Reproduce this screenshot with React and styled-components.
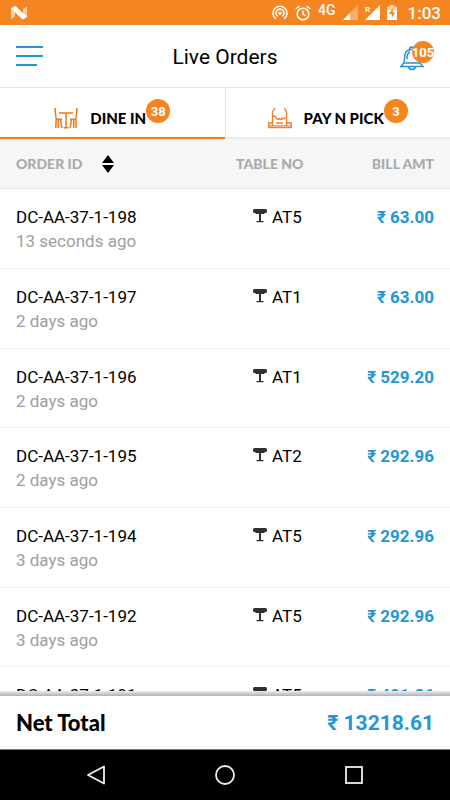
import React from "react";
import styled, { createGlobalStyle } from "styled-components";

const GlobalStyle = createGlobalStyle`
  * {
    box-sizing: border-box;
  }

  body {
    margin: 0;
    background-color: white;
    font-family: Roboto, "Liberation Sans", sans-serif;
  }

  button {
    margin: 0;
    padding: 0;
    border: none;
    background: none;
    color: inherit;
    font: inherit;
    cursor: pointer;
  }

  svg {
    display: block;
    flex: none;
  }
`;

const Screen = styled.div`
  display: flex;
  flex-direction: column;
  height: 100vh;
  color: black;
`;

const StatusBar = styled.div`
  display: flex;
  align-items: center;
  justify-content: space-between;
  height: 25px;
  flex: none;
  padding: 0 9px 0 11px;
  background-color: #f58520;
  color: white;
`;

const StatusIcons = styled.div`
  display: flex;
  align-items: center;
  gap: 7px;
`;

const Network = styled.span`
  align-self: flex-start;
  font-size: 14px;
  line-height: 18px;
  font-weight: 500;
`;

const Clock = styled.time`
  margin-left: 4px;
  font-size: 17px;
  line-height: 24px;
  font-weight: 500;
`;

const Header = styled.header`
  display: grid;
  grid-template-columns: 1fr auto 1fr;
  align-items: center;
  height: 63px;
  flex: none;
  padding: 0 16px;
  border-bottom: 1px solid #e2e2e2;
`;

const Title = styled.h1`
  margin: 2px 0 0;
  font-size: 21px;
  line-height: 24px;
  font-weight: 400;
`;

const MenuButton = styled.button`
  justify-self: start;
`;

const BellButton = styled.button`
  position: relative;
  justify-self: end;
  width: 34px;
  padding-top: 5px;
`;

const Badge = styled.span`
  display: flex;
  align-items: center;
  justify-content: center;
  flex: none;
  width: 24px;
  height: 24px;
  border-radius: 50%;
  background-color: #f58520;
  color: white;
  font-size: 13px;
  font-weight: 700;
`;

const BellBadge = styled(Badge)`
  position: absolute;
  top: 0;
  right: 0;
  width: 22px;
  height: 22px;
`;

const Tabs = styled.nav`
  display: flex;
  flex: none;
`;

const Tab = styled.button`
  display: flex;
  flex: 1;
  align-items: flex-start;
  justify-content: center;
  padding: 11px 0 7px;
  border-bottom: 2px solid ${(props) => (props.$active ? "#f57c0b" : "#ececec")};

  & + & {
    border-left: 1px solid #e2e2e2;
  }
`;

const TabLabel = styled.span`
  display: flex;
  align-items: center;
  gap: 12px;
  margin-top: 7px;
  font-family: Lato, "Liberation Sans", sans-serif;
  font-size: 15px;
  line-height: 24px;
  font-weight: 900;
`;

const Orders = styled.main`
  flex: 1;
  min-height: 0;
  overflow-y: auto;
  scrollbar-width: none;
`;

const OrderTable = styled.table`
  width: 100%;
  table-layout: fixed;
  border-collapse: separate;
  border-spacing: 0;
`;

const HeadCell = styled.th`
  position: sticky;
  top: 0;
  width: ${(props) => props.$width};
  height: 50px;
  padding: ${(props) => props.$padding};
  border-bottom: 1px solid #ececec;
  background-color: #f6f6f6;
  color: #aaa;
  font-family: Lato, "Liberation Sans", sans-serif;
  font-size: 14px;
  line-height: 20px;
  font-weight: 900;
  text-align: ${(props) => props.$align || "left"};
`;

const SortButton = styled.button`
  display: flex;
  align-items: center;
  gap: 19px;
`;

const Row = styled.tr`
  height: 80px;

  &:nth-child(3n) {
    height: 79px;
  }
`;

const Cell = styled.td`
  padding: 16px 16px 0;
  border-bottom: 1px solid #f3f3f3;
  font-size: 17px;
  line-height: 24px;
  vertical-align: top;
`;

const Age = styled.div`
  color: #9e9e9e;
`;

const TableCell = styled(Cell)`
  padding-left: 19px;
  padding-right: 0;
`;

const TableName = styled.div`
  display: flex;
  gap: 5px;

  svg {
    margin-top: 4px;
  }
`;

const AmountCell = styled(Cell)`
  padding-left: 0;
  color: #2196d8;
  font-weight: 700;
  text-align: right;
`;

const Total = styled.footer`
  flex: none;
  border-bottom: 1px solid #777;

  &::before {
    content: "";
    display: block;
    height: 5px;
    background: linear-gradient(#ececec, #b0b0b0);
  }
`;

const TotalRow = styled.div`
  display: flex;
  align-items: center;
  justify-content: space-between;
  height: 53px;
  padding: 0 16px;
  font-size: 21px;
  line-height: 24px;
`;

const TotalLabel = styled.span`
  font-family: Lato, "Liberation Sans", sans-serif;
  font-size: 22px;
  font-weight: 900;
`;

const TotalAmount = styled.span`
  color: #2196d8;
  font-weight: 700;
`;

const NavBar = styled.nav`
  display: flex;
  align-items: center;
  justify-content: center;
  gap: 109px;
  height: 50px;
  flex: none;
  background-color: black;
`;

const orders = [
  { id: "DC-AA-37-1-198", age: "13 seconds ago", table: "AT5", amount: "63.00" },
  { id: "DC-AA-37-1-197", age: "2 days ago", table: "AT1", amount: "63.00" },
  { id: "DC-AA-37-1-196", age: "2 days ago", table: "AT1", amount: "529.20" },
  { id: "DC-AA-37-1-195", age: "2 days ago", table: "AT2", amount: "292.96" },
  { id: "DC-AA-37-1-194", age: "3 days ago", table: "AT5", amount: "292.96" },
  { id: "DC-AA-37-1-192", age: "3 days ago", table: "AT5", amount: "292.96" },
  { id: "DC-AA-37-1-191", age: "3 days ago", table: "AT5", amount: "491.36" },
];

function AndroidN() {
  return (
    <svg width="16" height="14" viewBox="0 0 16 14">
      <path d="M0 2.5 4 0v10.5L0 13zM12 3l4-2.5V11l-4 2.5z" fill="#fbd0a8" />
      <path d="M0 2.5 4.5 0 16 11l-4.5 2.5z" fill="white" />
    </svg>
  );
}

function HotspotIcon() {
  return (
    <svg width="16" height="16" viewBox="0 0 16 16" fill="none" stroke="white" strokeWidth="1.5">
      <path d="M4 14A7 7 0 1 1 12 14" />
      <path d="M5.7 11.3A4 4 0 1 1 10.3 11.3" />
      <circle cx="8" cy="8.2" r="1.7" fill="white" stroke="none" />
    </svg>
  );
}

function AlarmIcon() {
  return (
    <svg width="16" height="16" viewBox="0 0 16 16" fill="none" stroke="white" strokeWidth="1.5">
      <circle cx="8" cy="9" r="5.8" />
      <path d="M8 5.5V9l2.7 1.8M.8 4 4.4 1M15.2 4 11.6 1" />
    </svg>
  );
}

function SignalIcon() {
  return (
    <svg width="15" height="15" viewBox="0 0 15 15">
      <path d="M15 0v15H0z" fill="#faae6d" />
      <path d="M7 8v7H0z" fill="white" />
    </svg>
  );
}

function RoamingIcon() {
  return (
    <svg width="15" height="15" viewBox="0 0 15 15">
      <path d="M15 0v15H0z" fill="white" />
      <text x="0" y="7" fontSize="8" fontWeight="700" fill="white">
        R
      </text>
    </svg>
  );
}

function BatteryIcon() {
  return (
    <svg width="10" height="15" viewBox="0 0 10 15">
      <path d="M0 1.5h3V0h4v1.5h3V5H0z" fill="#fbcfa6" />
      <path d="M0 5h10v10H0z" fill="white" />
      <path d="M5.8 3 2 9h2.7v4L8.2 7.4H5.8z" fill="#f58520" />
    </svg>
  );
}

function MenuIcon() {
  return (
    <svg width="27" height="22" viewBox="0 0 27 22" stroke="#2196d8" strokeWidth="2">
      <path d="M0 2h27M0 11h27M0 20h21" />
    </svg>
  );
}

function BellIcon() {
  return (
    <svg width="24" height="25" viewBox="0 0 24 25" fill="none" stroke="#2196d8" strokeWidth="1.5">
      <path d="M9.5 3.5C9.5.3 14 .3 14 3.5M3.7 17C5.2 14 4 10.5 5.3 7.5 7 2 17 2 18.5 7.5c1 3-.2 6.5 1.5 9.5" />
      <path d="M3.7 17h16.3l3 3.4H.9zM8.5 20.5c.7 4 6.3 4 7 0" />
      <path d="M7 13c-.2-3.5.5-6 3-7.2" />
    </svg>
  );
}

function DineIcon() {
  return (
    <svg width="24" height="22" viewBox="0 0 24 22" fill="none" stroke="#f57417" strokeWidth="1.5">
      <path d="M1 1c.1 4 .6 7 1.2 11L1.8 21M2 12.3h6M6.5 12.5 7.8 21M4.3 13v8" />
      <path d="M23 1c-.1 4-.6 7-1.2 11l.4 9M22 12.3h-6M17.500 12.500 16.200 21M19.700 13v8" />
      <path d="M5 6h14M12 6v14.500M9.500 20.800h5" />
    </svg>
  );
}

function PickIcon() {
  return (
    <svg width="24" height="22" viewBox="0 0 24 22" fill="none" stroke="#f57c28" strokeWidth="1.3">
      <path d="M7 1 4.500 5V19M16.500 1l2 4V19" />
      <path d="M4.500 8.500c2.500 0 2 2 3.500 1.500.5 3 2.500 3 3 1 .5 2 2.500 2 3 0 1 1.500 3 1 3-1" />
      <path d="M4.500 16H.7v4.700h22.600V16h-4.800M8 16h7M1 18.800h22" />
    </svg>
  );
}

function SortIcon() {
  return (
    <svg width="14" height="18" viewBox="0 0 14 18" fill="black">
      <path d="M7 0l6 8H1zM7 18l6-8H1z" />
    </svg>
  );
}

function TableIcon() {
  return (
    <svg width="14" height="14" viewBox="0 0 14 14" fill="#303030">
      <rect width="14" height="4" rx="1.500" />
      <path d="M2 4h10l-1 1H8v7h2.500v1.300h-7V12H6V5H3z" />
    </svg>
  );
}

function OrderRow({ order }) {
  return (
    <Row>
      <Cell>
        <div>{order.id}</div>
        <Age>{order.age}</Age>
      </Cell>
      <TableCell>
        <TableName>
          <TableIcon />
          {order.table}
        </TableName>
      </TableCell>
      <AmountCell>₹ {order.amount}</AmountCell>
    </Row>
  );
}

function App() {
  return (
    <Screen>
      <GlobalStyle />
      <StatusBar>
        <AndroidN />
        <StatusIcons>
          <HotspotIcon />
          <AlarmIcon />
          <Network>4G</Network>
          <SignalIcon />
          <RoamingIcon />
          <BatteryIcon />
          <Clock>1:03</Clock>
        </StatusIcons>
      </StatusBar>
      <Header>
        <MenuButton aria-label="Menu">
          <MenuIcon />
        </MenuButton>
        <Title>Live Orders</Title>
        <BellButton aria-label="Notifications">
          <BellIcon />
          <BellBadge>105</BellBadge>
        </BellButton>
      </Header>
      <Tabs>
        <Tab $active>
          <TabLabel>
            <DineIcon />
            DINE IN
          </TabLabel>
          <Badge>38</Badge>
        </Tab>
        <Tab>
          <TabLabel>
            <PickIcon />
            PAY N PICK
          </TabLabel>
          <Badge>3</Badge>
        </Tab>
      </Tabs>
      <Orders>
        <OrderTable>
          <thead>
            <tr>
              <HeadCell $width="52%" $padding="0 16px">
                <SortButton>
                  ORDER ID
                  <SortIcon />
                </SortButton>
              </HeadCell>
              <HeadCell $width="20%" $padding="0 2px">
                TABLE NO
              </HeadCell>
              <HeadCell $width="28%" $padding="0 16px 0 0" $align="right">
                BILL AMT
              </HeadCell>
            </tr>
          </thead>
          <tbody>
            {orders.map((order) => (
              <OrderRow key={order.id} order={order} />
            ))}
          </tbody>
        </OrderTable>
      </Orders>
      <Total>
        <TotalRow>
          <TotalLabel>Net Total</TotalLabel>
          <TotalAmount>₹ 13218.61</TotalAmount>
        </TotalRow>
      </Total>
      <NavBar>
        <button aria-label="Back">
          <svg width="20" height="20" viewBox="0 0 20 20" fill="none" stroke="#eee" strokeWidth="1.8">
            <path d="M18 1.5v17L2 10z" strokeLinejoin="round" />
          </svg>
        </button>
        <button aria-label="Home">
          <svg width="20" height="20" viewBox="0 0 20 20" fill="none" stroke="#eee" strokeWidth="1.8">
            <circle cx="10" cy="10" r="9" />
          </svg>
        </button>
        <button aria-label="Recents">
          <svg width="20" height="20" viewBox="0 0 20 20" fill="none" stroke="#eee" strokeWidth="1.8">
            <rect x="2" y="2" width="16" height="16" />
          </svg>
        </button>
      </NavBar>
    </Screen>
  );
}

export default App;
